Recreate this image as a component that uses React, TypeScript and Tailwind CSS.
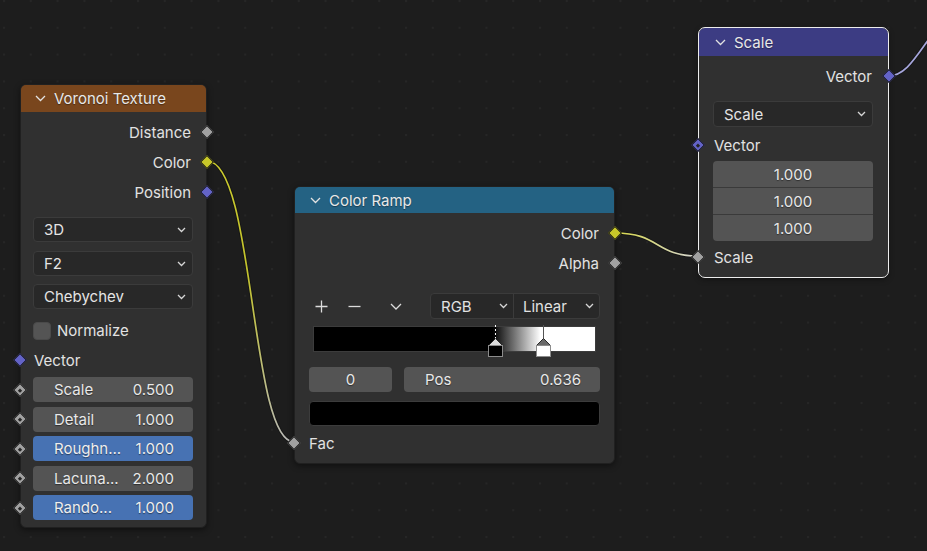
import React from "react";

type SocketProps = { color: string; side: "left" | "right"; dot?: boolean };

function Socket({ color, side, dot }: SocketProps) {
  return (
    <span
      className={
        side === "left"
          ? "absolute left-[-6px] top-1/2 -mt-[5px] w-[10px] h-[10px] rotate-45 border border-[#141414] flex items-center justify-center"
          : "absolute right-[-6px] top-1/2 -mt-[5px] w-[10px] h-[10px] rotate-45 border border-[#141414] flex items-center justify-center"
      }
      style={{ backgroundColor: color }}
    >
      {dot ? <span className="w-[3px] h-[3px] bg-[#262626]" /> : null}
    </span>
  );
}

function HeaderChevron() {
  return (
    <svg width="11" height="7" viewBox="0 0 11 7" className="shrink-0">
      <path d="M1 1 L5.5 5.5 L10 1" fill="none" stroke="#e2e2e2" strokeWidth="1.3" />
    </svg>
  );
}

function SmallChevron() {
  return (
    <svg width="9" height="6" viewBox="0 0 9 6" className="shrink-0">
      <path d="M1 1 L4.5 4.5 L8 1" fill="none" stroke="#d6d6d6" strokeWidth="1.3" />
    </svg>
  );
}

function Dropdown({ label, className }: { label: string; className?: string }) {
  return (
    <div
      className={
        "h-[25px] rounded-[4px] bg-[#282828] border border-[#3b3b3b] flex items-center justify-between pl-[10px] pr-[6px] text-[#e4e4e4] " +
        (className ?? "")
      }
    >
      <span>{label}</span>
      <SmallChevron />
    </div>
  );
}

function Field({ label, value, blue }: { label: string; value: string; blue?: boolean }) {
  return (
    <div
      className={
        blue
          ? "h-[25px] rounded-[4px] bg-[#4772b3] flex items-center justify-between pl-[21px] pr-[19px] text-[#eeeeee] [text-shadow:0_1px_1px_rgba(0,0,0,0.45)]"
          : "h-[25px] rounded-[4px] bg-[#545454] flex items-center justify-between pl-[21px] pr-[19px] text-[#e8e8e8] [text-shadow:0_1px_1px_rgba(0,0,0,0.45)]"
      }
    >
      <span>{label}</span>
      <span>{value}</span>
    </div>
  );
}

const GRAY = "#a1a1a1";
const YELLOW = "#c7c729";
const PURPLE = "#6363c7";

function FieldRow({ label, value, blue }: { label: string; value: string; blue?: boolean }) {
  return (
    <div className="relative pl-[12px] pr-[13px]">
      <Socket color={GRAY} side="left" dot />
      <Field label={label} value={value} blue={blue} />
    </div>
  );
}

function VoronoiNode() {
  return (
    <div className="absolute left-[20px] top-[84px] w-[187px] rounded-[6px] bg-[#303030] border border-[#202020] shadow-[0_2px_6px_rgba(0,0,0,0.45)] flex flex-col">
      <div className="h-[27px] rounded-t-[5px] bg-[#79461d] flex items-center gap-[8px] pl-[14px] text-[#e8e8e8] [text-shadow:0_1px_1px_rgba(0,0,0,0.4)]">
        <HeaderChevron />
        <span>Voronoi Texture</span>
      </div>
      <div className="flex flex-col pt-[5px] pb-[7px]">
        <div className="relative h-[30px] flex items-center justify-end pr-[15px]">
          <span>Distance</span>
          <Socket color={GRAY} side="right" />
        </div>
        <div className="relative h-[30px] flex items-center justify-end pr-[15px]">
          <span>Color</span>
          <Socket color={YELLOW} side="right" />
        </div>
        <div className="relative h-[30px] flex items-center justify-end pr-[15px]">
          <span>Position</span>
          <Socket color={PURPLE} side="right" />
        </div>
        <div className="pl-[12px] pr-[13px] mt-[10px] flex flex-col">
          <Dropdown label="3D" />
          <Dropdown label="F2" className="mt-[9px]" />
          <Dropdown label="Chebychev" className="mt-[8px]" />
        </div>
        <div className="mt-[7px] h-[29px] flex items-center pl-[12px] gap-[6px]">
          <span className="w-[18px] h-[18px] rounded-[4px] bg-[#545454] border border-[#4a4a4a]" />
          <span>Normalize</span>
        </div>
        <div className="relative h-[30px] flex items-center pl-[13px]">
          <span>Vector</span>
          <Socket color={PURPLE} side="left" />
        </div>
        <div className="mt-[2px] flex flex-col gap-[4.5px]">
          <FieldRow label="Scale" value="0.500" />
          <FieldRow label="Detail" value="1.000" />
          <FieldRow label="Roughn..." value="1.000" blue />
          <FieldRow label="Lacuna..." value="2.000" />
          <FieldRow label="Rando..." value="1.000" blue />
        </div>
      </div>
    </div>
  );
}

function RampMarker({ x, active }: { x: number; active: boolean }) {
  return (
    <svg
      width="17"
      height="33"
      viewBox="0 0 17 33"
      className="absolute top-[-1px]"
      style={{ left: x - 8.5 }}
    >
      {active ? (
        <>
          <line x1="8.5" y1="0" x2="8.5" y2="14" stroke="#000" strokeWidth="1" />
          <line x1="8.5" y1="0" x2="8.5" y2="14" stroke="#fff" strokeWidth="1" strokeDasharray="2 2" />
          <polygon points="1.5,20.5 8.5,13.5 15.5,20.5" fill="#dcdcdc" stroke="#2a2a2a" strokeWidth="1" />
          <rect x="1.5" y="20.5" width="14" height="11" fill="#000" stroke="#8c8c8c" strokeWidth="1" />
        </>
      ) : (
        <>
          <line x1="8.5" y1="0" x2="8.5" y2="14" stroke="#555" strokeWidth="1" />
          <polygon points="1.5,20.5 8.5,13.5 15.5,20.5" fill="#6a6a6a" stroke="#2a2a2a" strokeWidth="1" />
          <rect x="1.5" y="20.5" width="14" height="11" fill="#fff" stroke="#8c8c8c" strokeWidth="1" />
        </>
      )}
    </svg>
  );
}

function ColorRampNode() {
  return (
    <div className="absolute left-[294px] top-[186px] w-[321px] rounded-[6px] bg-[#303030] border border-[#202020] shadow-[0_2px_6px_rgba(0,0,0,0.45)] flex flex-col">
      <div className="h-[26px] rounded-t-[5px] bg-[#246283] flex items-center gap-[8px] pl-[15px] text-[#e8e8e8] [text-shadow:0_1px_1px_rgba(0,0,0,0.4)]">
        <HeaderChevron />
        <span>Color Ramp</span>
      </div>
      <div className="flex flex-col pt-[5px] pb-[5px]">
        <div className="relative h-[30px] flex items-center justify-end pr-[15px]">
          <span>Color</span>
          <Socket color={YELLOW} side="right" />
        </div>
        <div className="relative h-[30px] flex items-center justify-end pr-[15px]">
          <span>Alpha</span>
          <Socket color={GRAY} side="right" />
        </div>
        <div className="mt-[15px] h-[26px] flex items-center px-[14px]">
          <span className="w-[24px] flex justify-center">
            <svg width="13" height="13" viewBox="0 0 13 13">
              <path d="M6.5 0.5 V12.5 M0.5 6.5 H12.5" stroke="#dcdcdc" strokeWidth="1.3" />
            </svg>
          </span>
          <span className="ml-[9px] w-[24px] flex justify-center">
            <svg width="13" height="13" viewBox="0 0 13 13">
              <path d="M0.5 6.5 H12.5" stroke="#dcdcdc" strokeWidth="1.3" />
            </svg>
          </span>
          <span className="ml-[18px] w-[24px] flex justify-center">
            <svg width="12" height="7" viewBox="0 0 12 7">
              <path d="M1 1 L6 6 L11 1" fill="none" stroke="#dcdcdc" strokeWidth="1.3" />
            </svg>
          </span>
          <div className="ml-auto w-[170px] h-[26px] rounded-[4px] bg-[#282828] border border-[#3b3b3b] flex">
            <div className="w-[83px] flex items-center justify-between pl-[10px] pr-[5px] border-r border-[#3b3b3b]">
              <span>RGB</span>
              <SmallChevron />
            </div>
            <div className="flex-1 flex items-center justify-between pl-[9px] pr-[5px]">
              <span>Linear</span>
              <SmallChevron />
            </div>
          </div>
        </div>
        <div className="mt-[7px] mx-[18px] relative h-[26px]">
          <div className="absolute inset-0 border border-[#3c3c3c] bg-[linear-gradient(90deg,#000_63.6%,#fff_80.6%)]" />
          <RampMarker x={182} active />
          <RampMarker x={230} active={false} />
        </div>
        <div className="mt-[15px] px-[14px] flex gap-[12px]">
          <div className="w-[83px] h-[25px] rounded-[4px] bg-[#545454] flex items-center justify-center text-[#e8e8e8] [text-shadow:0_1px_1px_rgba(0,0,0,0.45)]">
            0
          </div>
          <div className="flex-1">
            <Field label="Pos" value="0.636" />
          </div>
        </div>
        <div className="mt-[9px] px-[14px]">
          <div className="h-[25px] rounded-[4px] bg-black border border-[#3c3c3c]" />
        </div>
        <div className="mt-[2px] relative h-[30px] flex items-center pl-[14px]">
          <span>Fac</span>
          <Socket color={GRAY} side="left" />
        </div>
      </div>
    </div>
  );
}

function ScaleNode() {
  return (
    <div className="absolute left-[699px] top-[28px] w-[189px] rounded-[6px] bg-[#303030] outline-[1.5px] outline-solid outline-[#ededed] shadow-[0_2px_6px_rgba(0,0,0,0.45)] flex flex-col">
      <div className="h-[28px] rounded-t-[6px] bg-[#3c3c83] flex items-center gap-[8px] pl-[16px] text-[#e8e8e8] [text-shadow:0_1px_1px_rgba(0,0,0,0.4)]">
        <HeaderChevron />
        <span>Scale</span>
      </div>
      <div className="flex flex-col pt-[5px] pb-[5px]">
        <div className="relative h-[30px] flex items-center justify-end pr-[16px]">
          <span>Vector</span>
          <Socket color={PURPLE} side="right" />
        </div>
        <div className="mt-[10px] pl-[14px] pr-[15px]">
          <Dropdown label="Scale" className="h-[26px]" />
        </div>
        <div className="mt-[3px] relative h-[30px] flex items-center pl-[15px]">
          <span>Vector</span>
          <Socket color={PURPLE} side="left" dot />
        </div>
        <div className="mt-[1px] pl-[14px] pr-[15px]">
          <div className="h-[80px] rounded-[4px] bg-[#545454] flex flex-col overflow-hidden text-[#e8e8e8] [text-shadow:0_1px_1px_rgba(0,0,0,0.45)]">
            <div className="flex-1 flex items-center justify-center border-b border-[#3a3a3a]">1.000</div>
            <div className="flex-1 flex items-center justify-center border-b border-[#3a3a3a]">1.000</div>
            <div className="flex-1 flex items-center justify-center">1.000</div>
          </div>
        </div>
        <div className="mt-[1px] relative h-[30px] flex items-center pl-[15px]">
          <span>Scale</span>
          <Socket color={GRAY} side="left" />
        </div>
      </div>
    </div>
  );
}

function Links() {
  return (
    <svg className="absolute inset-0" width="927" height="551" viewBox="0 0 927 551">
      <defs>
        <pattern id="grid" x="3" y="0" width="26.8" height="26.8" patternUnits="userSpaceOnUse">
          <rect x="0" y="0" width="2" height="2" fill="#262626" />
        </pattern>
        <linearGradient id="l1" gradientUnits="userSpaceOnUse" x1="207" y1="161" x2="294" y2="442">
          <stop offset="0" stopColor="#cccc2e" />
          <stop offset="0.4" stopColor="#c2c22c" />
          <stop offset="1" stopColor="#b8b8b8" />
        </linearGradient>
        <linearGradient id="l2" gradientUnits="userSpaceOnUse" x1="615" y1="233" x2="698" y2="256">
          <stop offset="0" stopColor="#d8d84a" />
          <stop offset="1" stopColor="#d4d4d4" />
        </linearGradient>
      </defs>
      <rect width="927" height="551" fill="url(#grid)" />
      <path d="M207 161 C 255 161, 250 442, 294 442" fill="none" stroke="#121212" strokeOpacity="0.7" strokeWidth="3.6" />
      <path d="M207 161 C 255 161, 250 442, 294 442" fill="none" stroke="url(#l1)" strokeWidth="1.7" />
      <path d="M615 233 C 660 233, 655 256, 698 256" fill="none" stroke="#121212" strokeOpacity="0.7" strokeWidth="3.6" />
      <path d="M615 233 C 660 233, 655 256, 698 256" fill="none" stroke="url(#l2)" strokeWidth="1.7" />
      <path d="M888 76 C 908 76, 918 52, 940 24" fill="none" stroke="#121212" strokeOpacity="0.7" strokeWidth="3.6" />
      <path d="M888 76 C 908 76, 918 52, 940 24" fill="none" stroke="#a6a6dc" strokeWidth="1.7" />
    </svg>
  );
}

export default function App() {
  return (
    <div className="relative w-[927px] h-[551px] overflow-hidden bg-[#1d1d1d] text-[15px] leading-none text-[#e2e2e2] font-['Inter',_'Noto_Sans',_sans-serif]">
      <Links />
      <VoronoiNode />
      <ColorRampNode />
      <ScaleNode />
    </div>
  );
}
